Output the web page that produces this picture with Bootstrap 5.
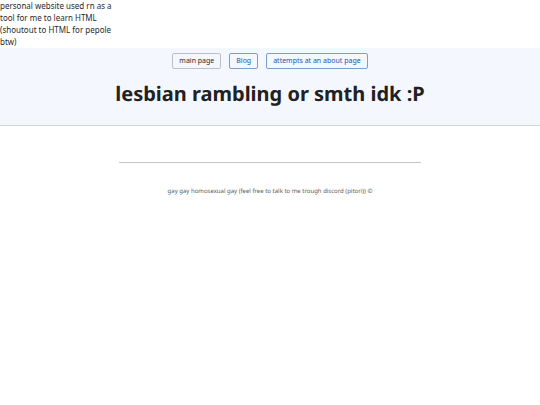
<!DOCTYPE html>
<html lang="en">
<head>
  <meta charset="UTF-8" />
  <meta name="viewport" content="width=device-width, initial-scale=1" />
  <title>lesbian rambling or smth idk :P</title>
  <link href="https://cdn.jsdelivr.net/npm/bootstrap@5.3.3/dist/css/bootstrap.min.css" rel="stylesheet">
  <style>
    body {
      font-family: "Noto Sans", sans-serif;
      font-size: 7px;
      line-height: 12px;
      color: #2a2a2a;
      background: #fff;
    }

    .intro {
      width: 20%;
      min-width: 114px;
      font-size: 8px;
    }

    .site-header {
      background: #f5f7ff;
      border-bottom: 1px solid #d0d4dc;
      padding: 5px 8px 18px;
    }

    .site-nav {
      gap: 8px;
    }

    .site-nav .btn {
      --bs-btn-font-size: 7px;
      --bs-btn-line-height: 14px;
      --bs-btn-padding-x: 6px;
      --bs-btn-padding-y: 0;
      --bs-btn-border-radius: 2px;
      --bs-btn-color: #2456a8;
      --bs-btn-border-color: #7f9dcb;
    }

    .site-nav .btn.current {
      --bs-btn-color: #2a2a2a;
      --bs-btn-border-color: #bcc0c8;
    }

    .site-title {
      color: #212121;
      font-size: 20px;
      line-height: 26px;
      font-weight: 700;
      margin-top: 12px;
      text-rendering: geometricPrecision;
    }

    .site-footer {
      width: 56%;
      margin-top: 36px;
      padding-top: 22px;
      border-top: 1px solid #c4c4c4;
      font-size: 6px;
      color: #585858;
      text-rendering: geometricPrecision;
    }
  </style>
</head>
<body>
  <p class="intro mb-0">personal website used rn as a tool for me to learn HTML (shoutout to HTML for pepole btw)</p>

  <header class="site-header text-center">
    <nav class="site-nav d-flex flex-wrap justify-content-center">
      <a class="btn current" href="#" aria-current="page">main page</a>
      <a class="btn" href="#blog">Blog</a>
      <a class="btn" href="#about">attempts at an about page</a>
    </nav>
    <h1 class="site-title mb-0">lesbian rambling or smth idk :P</h1>
  </header>

  <footer class="site-footer mx-auto text-center">
    <p class="mb-0">gay gay homosexual gay (feel free to talk to me trough discord (pitori)) ©</p>
  </footer>

  <script src="https://cdn.jsdelivr.net/npm/bootstrap@5.3.3/dist/js/bootstrap.bundle.min.js"></script>
</body>
</html>
